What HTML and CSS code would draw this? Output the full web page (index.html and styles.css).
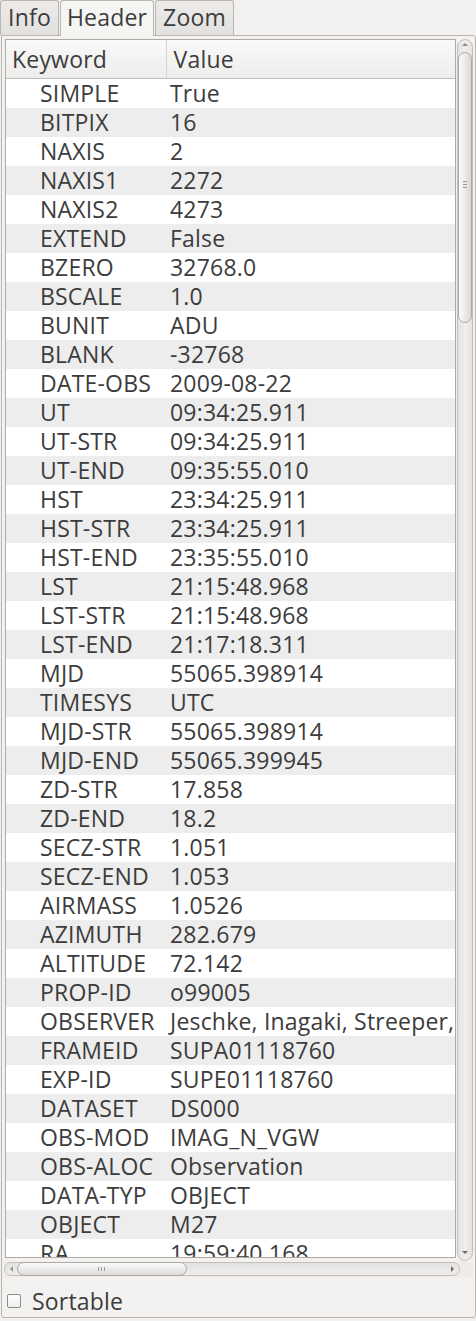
FILE: index.html
```html
<!DOCTYPE html>
<html lang="en">
<head>
  <meta charset="UTF-8" />
  <title>FITS Header</title>
  <link rel="stylesheet" href="styles.css">
</head>
<body>

  <div class="tabs">
    <div class="tab tab-info">Info</div>
    <div class="tab tab-header current">Header</div>
    <div class="tab tab-zoom">Zoom</div>
  </div>

  <div class="pane">
    <div class="view">
      <div class="frame">
        <table class="header-table">
          <colgroup>
            <col class="col-key">
            <col>
          </colgroup>
          <thead>
            <tr><th class="th-key">Keyword</th><th class="th-value">Value</th></tr>
          </thead>
          <tbody>
            <tr><td class="key">SIMPLE</td><td class="value">True</td></tr>
            <tr><td class="key">BITPIX</td><td class="value">16</td></tr>
            <tr><td class="key">NAXIS</td><td class="value">2</td></tr>
            <tr><td class="key">NAXIS1</td><td class="value">2272</td></tr>
            <tr><td class="key">NAXIS2</td><td class="value">4273</td></tr>
            <tr><td class="key">EXTEND</td><td class="value">False</td></tr>
            <tr><td class="key">BZERO</td><td class="value">32768.0</td></tr>
            <tr><td class="key">BSCALE</td><td class="value">1.0</td></tr>
            <tr><td class="key">BUNIT</td><td class="value">ADU</td></tr>
            <tr><td class="key">BLANK</td><td class="value">-32768</td></tr>
            <tr><td class="key">DATE-OBS</td><td class="value">2009-08-22</td></tr>
            <tr><td class="key">UT</td><td class="value">09:34:25.911</td></tr>
            <tr><td class="key">UT-STR</td><td class="value">09:34:25.911</td></tr>
            <tr><td class="key">UT-END</td><td class="value">09:35:55.010</td></tr>
            <tr><td class="key">HST</td><td class="value">23:34:25.911</td></tr>
            <tr><td class="key">HST-STR</td><td class="value">23:34:25.911</td></tr>
            <tr><td class="key">HST-END</td><td class="value">23:35:55.010</td></tr>
            <tr><td class="key">LST</td><td class="value">21:15:48.968</td></tr>
            <tr><td class="key">LST-STR</td><td class="value">21:15:48.968</td></tr>
            <tr><td class="key">LST-END</td><td class="value">21:17:18.311</td></tr>
            <tr><td class="key">MJD</td><td class="value">55065.398914</td></tr>
            <tr><td class="key">TIMESYS</td><td class="value">UTC</td></tr>
            <tr><td class="key">MJD-STR</td><td class="value">55065.398914</td></tr>
            <tr><td class="key">MJD-END</td><td class="value">55065.399945</td></tr>
            <tr><td class="key">ZD-STR</td><td class="value">17.858</td></tr>
            <tr><td class="key">ZD-END</td><td class="value">18.2</td></tr>
            <tr><td class="key">SECZ-STR</td><td class="value">1.051</td></tr>
            <tr><td class="key">SECZ-END</td><td class="value">1.053</td></tr>
            <tr><td class="key">AIRMASS</td><td class="value">1.0526</td></tr>
            <tr><td class="key">AZIMUTH</td><td class="value">282.679</td></tr>
            <tr><td class="key">ALTITUDE</td><td class="value">72.142</td></tr>
            <tr><td class="key">PROP-ID</td><td class="value">o99005</td></tr>
            <tr><td class="key">OBSERVER</td><td class="value">Jeschke, Inagaki, Streeper,</td></tr>
            <tr><td class="key">FRAMEID</td><td class="value">SUPA01118760</td></tr>
            <tr><td class="key">EXP-ID</td><td class="value">SUPE01118760</td></tr>
            <tr><td class="key">DATASET</td><td class="value">DS000</td></tr>
            <tr><td class="key">OBS-MOD</td><td class="value">IMAG_N_VGW</td></tr>
            <tr><td class="key">OBS-ALOC</td><td class="value">Observation</td></tr>
            <tr><td class="key">DATA-TYP</td><td class="value">OBJECT</td></tr>
            <tr><td class="key">OBJECT</td><td class="value">M27</td></tr>
            <tr><td class="key">RA</td><td class="value">19:59:40.168</td></tr>
          </tbody>
        </table>
      </div>

      <!-- vertical scrollbar -->
      <div class="vscroll">
        <span class="arrow arrow-up"></span>
        <div class="vthumb"><span class="grip-h"></span></div>
        <span class="arrow arrow-down"></span>
      </div>
    </div>

    <div class="hbar">
      <div class="hscroll">
        <span class="arrow arrow-left"></span>
        <div class="hthumb"><span class="grip-v"></span></div>
        <span class="arrow arrow-right"></span>
      </div>
    </div>

    <label class="sortable"><span class="check"></span>Sortable</label>
  </div>

</body>
</html>
```

FILE: styles.css
```css
body {
  margin: 0;
  background-color: #f2f1f0;
  font-family: "Open Sans", "Noto Sans", sans-serif;
  font-size: 23px;
  letter-spacing: 0.2px;
  color: #3c3c3c;
  width: 476px;
  height: 1321px;
  overflow: hidden;
}

/* tab strip */
.tabs {
  display: flex;
  height: 35px;
}

.tab {
  box-sizing: border-box;
  height: 35px;
  line-height: 33px;
  text-align: center;
  border: 1px solid #b9b6b2;
  border-bottom: none;
  border-radius: 3px 3px 0 0;
  background: linear-gradient(#ecebea, #e2e1df);
  margin-right: 1px;
}

.tab-info { width: 59px; }
.tab-header { width: 94px; }
.tab-zoom { width: 79px; }

.tab.current {
  background: #f5f5f4;
  position: relative;
  z-index: 1;
  height: 36px;
}

/* page under the tabs */
.pane {
  box-sizing: border-box;
  margin-left: 1px;
  width: 475px;
  height: 1283px;
  border: 1px solid #b9b6b2;
  border-radius: 0 3px 3px 3px;
  padding: 3px 2px 0 3px;
  background: #f3f2f1;
}

.view {
  display: flex;
  align-items: flex-start;
  height: 1222px;
}

.frame {
  box-sizing: border-box;
  width: 451px;
  height: 1219px;
  border: 1px solid #aeaba7;
  background: #fff;
  overflow: hidden;
}

.header-table {
  border-collapse: collapse;
  table-layout: fixed;
  width: 449px;
}

.col-key { width: 160px; }

.header-table th {
  height: 38px;
  padding: 0;
  font-weight: normal;
  text-align: left;
  background: linear-gradient(#f9f9f9, #eeedec);
  border-bottom: 1px solid #bebbb8;
}

.th-key {
  padding-left: 6px !important;
  border-right: 1px solid #d6d4d1;
}

.th-value { padding-left: 7px !important; }

.header-table td {
  height: 29px;
  padding: 0;
  white-space: nowrap;
  line-height: 29px;
}

.header-table tbody tr:nth-child(even) td {
  background: #ededed;
}

.key { padding-left: 34px !important; }
.value { padding-left: 4px !important; }

/* scrollbars */
.vscroll {
  position: relative;
  box-sizing: border-box;
  width: 16px;
  height: 1222px;
  margin-left: 1px;
  border: 1px solid #c3c0bc;
  border-radius: 8px;
  background: linear-gradient(90deg, #e4e3e2, #f0efee 50%, #e4e3e2);
}

.vthumb {
  position: absolute;
  left: 0;
  top: 12px;
  width: 12px;
  height: 269px;
  border: 1px solid #adaaa6;
  border-radius: 7px;
  background: linear-gradient(90deg, #fbfbfb, #e9e8e7 60%, #dad9d8);
}

.grip-h {
  position: absolute;
  left: 4px;
  top: 128px;
  width: 4px;
  height: 7px;
  background: repeating-linear-gradient(#9a9794 0 1px, transparent 1px 3px);
}

.arrow {
  position: absolute;
  width: 0;
  height: 0;
  border: 3px solid transparent;
}

.arrow-up {
  left: 4px;
  top: 3px;
  border-bottom-color: #8c8986;
  border-top-width: 0;
}

.arrow-down {
  left: 4px;
  bottom: 6px;
  border-top-color: #6e6b68;
  border-bottom-width: 0;
}

.hbar {
  margin: 1px 0 0 -1px;
  width: 469px;
  height: 15px;
  background: #edecea;
}

.hscroll {
  position: relative;
  box-sizing: border-box;
  width: 456px;
  height: 14px;
  border: 1px solid #c3c0bc;
  border-radius: 7px;
  background: linear-gradient(#e3e2e1, #efeeed);
}

.hthumb {
  position: absolute;
  left: 12px;
  top: -1px;
  width: 168px;
  height: 12px;
  border: 1px solid #adaaa6;
  border-radius: 7px;
  background: linear-gradient(#fbfbfb, #e9e8e7 60%, #dcdbda);
}

.grip-v {
  position: absolute;
  left: 80px;
  top: 4px;
  width: 7px;
  height: 4px;
  background: repeating-linear-gradient(90deg, #9a9794 0 1px, transparent 1px 3px);
}

.arrow-left {
  left: 5px;
  top: 3px;
  border-right-color: #9a9794;
  border-left-width: 0;
}

.arrow-right {
  right: 5px;
  top: 3px;
  border-left-color: #6e6b68;
  border-right-width: 0;
}

/* checkbox row */
.sortable {
  display: flex;
  align-items: center;
  height: 24px;
  margin-top: 12px;
}

.check {
  box-sizing: border-box;
  width: 14px;
  height: 14px;
  margin: 0 11px 0 2px;
  border: 1px solid #8e8b88;
  border-radius: 2px;
  background: linear-gradient(#fdfdfd, #efefee);
}
```
